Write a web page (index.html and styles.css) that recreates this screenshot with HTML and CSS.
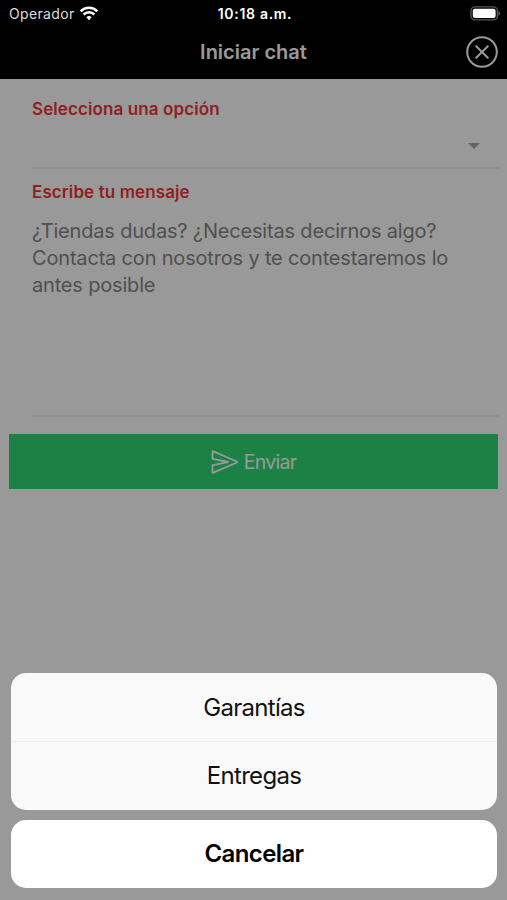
FILE: index.html
```html
<!DOCTYPE html>
<html lang="es">
<head>
  <meta charset="UTF-8" />
  <meta name="viewport" content="width=device-width, initial-scale=1.0"/>
  <title>Iniciar chat</title>
  <link rel="stylesheet" href="styles.css">
</head>
<body>
  <header class="header">
    <div class="status-bar">
      <div class="carrier">
        <span class="carrier-name">Operador</span>
        <svg class="wifi" viewBox="0 0 20 15" width="20" height="15">
          <path d="M1.6 5.3a12 12 0 0 1 16.8 0" />
          <path d="M4.6 8.5a7.8 7.8 0 0 1 10.8 0" />
          <path class="wifi-dot" d="M10 14.2l-2.7-2.9a3.9 3.9 0 0 1 5.4 0z" />
        </svg>
      </div>
      <span class="time">10:18 a.m.</span>
      <svg class="battery" viewBox="0 0 31 15" width="31" height="15">
        <rect class="battery-frame" x="1" y=".9" width="26.4" height="13" rx="4" />
        <rect class="battery-level" x="2.8" y="2.7" width="22.8" height="9.4" rx="2" />
        <path class="battery-tip" d="M28.5 5c2 .7 2 4.1 0 4.8z" />
      </svg>
    </div>
    <div class="nav-bar">
      <h1 class="title">Iniciar chat</h1>
      <button class="close-button" aria-label="Cerrar">
        <svg viewBox="0 0 32 32" width="32" height="32">
          <circle cx="16" cy="16" r="14.8" />
          <path d="M10.2 10.2l11.6 11.6M21.8 10.2L10.2 21.8" />
        </svg>
      </button>
    </div>
  </header>

  <main class="form">
    <div class="field field-select">
      <label class="label">Selecciona una opción</label>
      <div class="select"><span class="arrow"></span></div>
    </div>
    <div class="field field-message">
      <label class="label">Escribe tu mensaje</label>
      <p class="placeholder">
        ¿Tiendas dudas? ¿Necesitas decirnos algo?<br>
        Contacta con nosotros y te contestaremos lo<br>
        antes posible
      </p>
    </div>
    <button class="send-button">
      <svg viewBox="0 0 28 24" width="28" height="24">
        <path d="M1.5 1.8v7l16 3.2-16 3.2v7q0 .8.8.5L25.8 12.5q.8-.5 0-1L2.3 1.3q-.8-.3-.8.5z" />
      </svg>
      <span class="send-text">Enviar</span>
    </button>
  </main>

  <div class="backdrop"></div>

  <div class="action-sheet">
    <div class="options">
      <button class="option">Garantías</button>
      <button class="option">Entregas</button>
    </div>
    <button class="option cancel">Cancelar</button>
  </div>
</body>
</html>
```

FILE: styles.css
```css
* { box-sizing: border-box; }
body {
  font-family: Inter, sans-serif;
  margin: 0;
  height: 900px;
  position: relative;
  overflow: hidden;
  background-color: #fff;
}
button {
  font-family: inherit;
  border: none;
  padding: 0;
  cursor: pointer;
}
svg {
  display: block;
  fill: none;
}
.header {
  height: 79px;
  background-color: #000;
  color: #fff;
}
.status-bar {
  position: relative;
  z-index: 2; /* queda por encima del fondo oscuro */
  height: 27px;
  padding: 0 6px 0 9px;
  display: grid;
  grid-template-columns: 1fr auto 1fr;
  align-items: center;
  font-size: 14px;
}
.carrier {
  display: flex;
  align-items: center;
  gap: 4px;
  color: #ddd;
  letter-spacing: 0.35px;
}
.wifi path {
  stroke: #fff;
  stroke-width: 2.5;
}
.wifi .wifi-dot {
  fill: #fff;
  stroke: none;
}
.time {
  font-weight: 600;
  letter-spacing: 0.7px;
}
.battery {
  justify-self: end;
}
.battery-frame {
  stroke: #555;
  stroke-width: 1.4;
}
.battery-level { fill: #fff; }
.battery-tip { fill: #666; }
.nav-bar {
  height: 50px;
  padding: 0 9px;
  display: grid;
  grid-template-columns: 1fr auto 1fr;
  align-items: center;
}
.title {
  grid-column: 2;
  margin: 0;
  font-size: 20px;
  font-weight: 600;
}
.close-button {
  justify-self: end;
  background: none;
}
.close-button svg {
  stroke: #fff;
  stroke-width: 2;
  stroke-linecap: round;
}
.form {
  padding: 0 7px 0 9px;
}
.field {
  margin-left: 23px;
}
.field-select {
  height: 90px;
  padding-top: 19px;
  border-bottom: 2px solid #eee;
}
.field-message {
  height: 248px;
  padding-top: 12px;
  border-bottom: 2px solid #f2f2f2;
}
.label {
  display: block;
  width: max-content;
  line-height: 22px;
  font-size: 17px;
  font-weight: 600;
  letter-spacing: 0.1px;
  color: #f03638;
}
.select {
  display: flex;
  justify-content: flex-end;
  padding: 23px 20px 0 0;
}
.arrow {
  border: 6px solid transparent;
  border-top-color: #a5a5a5;
  border-bottom: none;
}
.placeholder {
  margin: 15px 0 0;
  font-size: 20px;
  line-height: 27px;
  letter-spacing: -0.18px;
  color: #868686;
  white-space: nowrap;
}
.send-button {
  width: 489px;
  height: 55px;
  margin-top: 17px;
  display: flex;
  align-items: center;
  justify-content: center;
  gap: 5px;
  background-color: #2fd872;
  color: #fff;
  font-size: 19.5px;
}
.send-button svg {
  stroke: #fff;
  stroke-width: 1.8;
}
.send-text {
  letter-spacing: -0.7px;
}
.backdrop {
  position: absolute;
  inset: 0;
  z-index: 1;
  background-color: rgba(0,0,0,0.4);
}
.action-sheet {
  position: absolute;
  left: 11px;
  right: 10px;
  bottom: 12px;
  z-index: 3;
  display: flex;
  flex-direction: column;
  gap: 10px;
}
.options {
  border-radius: 15px;
  overflow: hidden;
  background-color: #f9f9f9;
}
.option {
  display: block;
  width: 100%;
  height: 68.5px;
  padding-top: 1px;
  background: none;
  color: #111;
  font-size: 24px;
  letter-spacing: -0.7px;
}
.option + .option {
  padding-top: 0;
  border-top: 1px solid #ededed;
}
.action-sheet .cancel {
  padding-top: 0;
  border-radius: 15px;
  background-color: #fff;
  color: #000;
  font-weight: 600;
  letter-spacing: -0.6px;
}
```
